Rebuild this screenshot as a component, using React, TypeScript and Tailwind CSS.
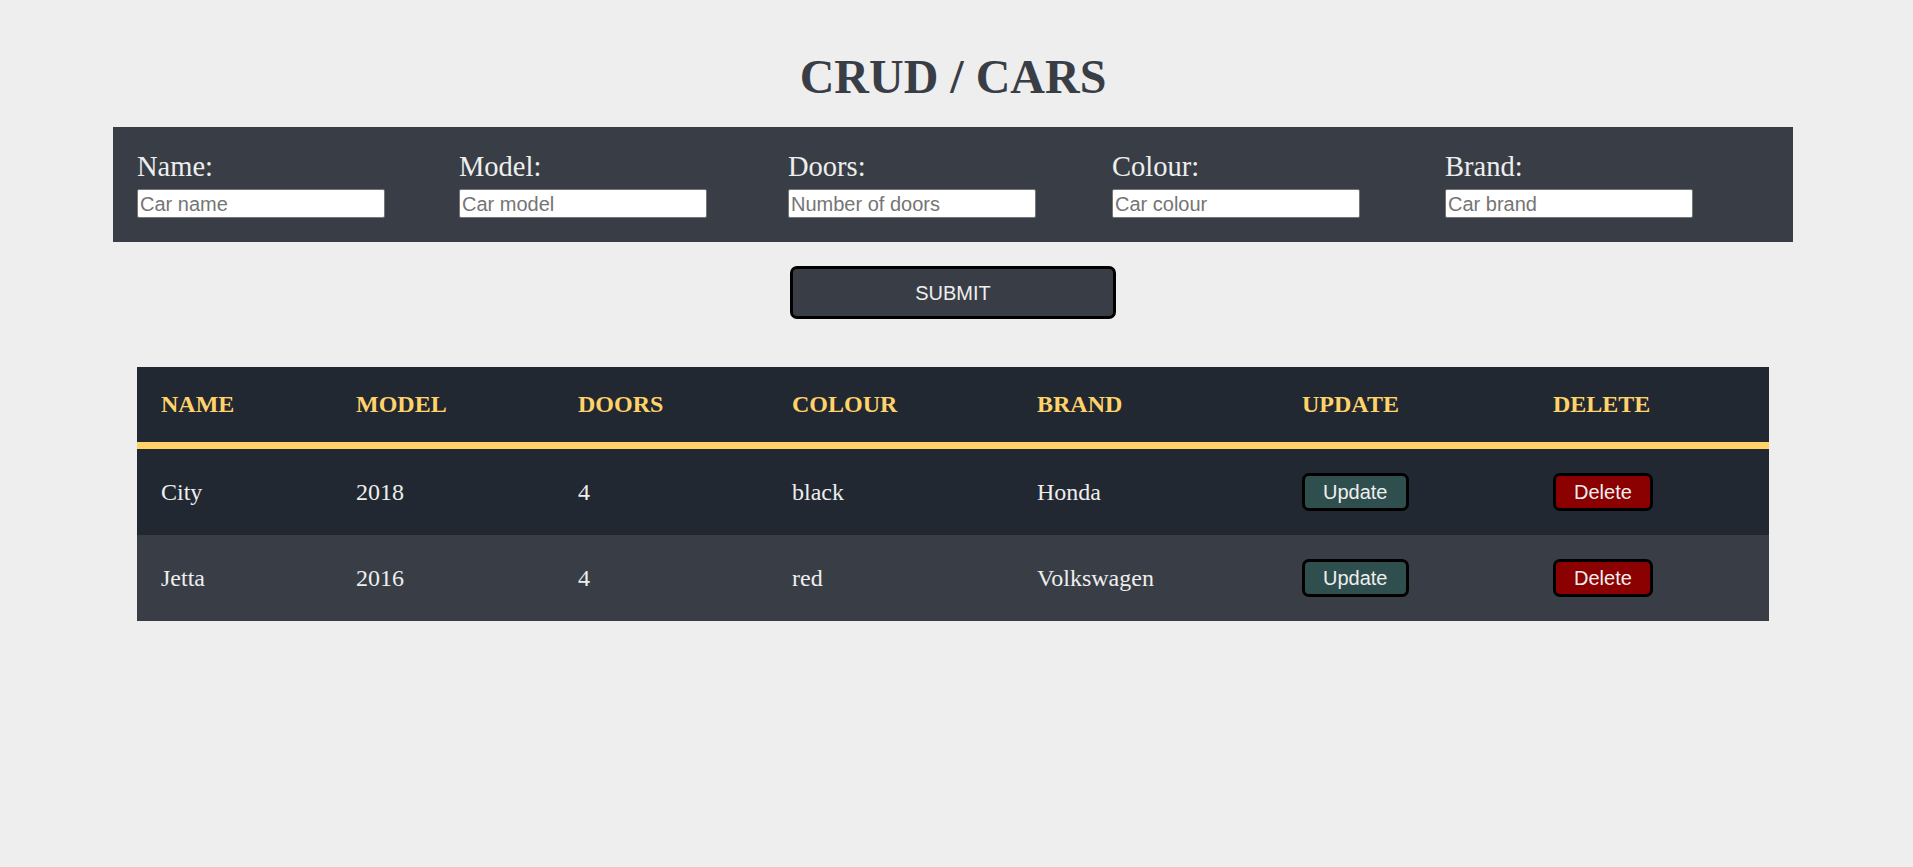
const fields = [
  { label: "Name:", placeholder: "Car name" },
  { label: "Model:", placeholder: "Car model" },
  { label: "Doors:", placeholder: "Number of doors" },
  { label: "Colour:", placeholder: "Car colour" },
  { label: "Brand:", placeholder: "Car brand" },
];

const columns = [
  { title: "NAME", className: "w-[195px]" },
  { title: "MODEL", className: "w-[222px]" },
  { title: "DOORS", className: "w-[214px]" },
  { title: "COLOUR", className: "w-[245px]" },
  { title: "BRAND", className: "w-[265px]" },
  { title: "UPDATE", className: "w-[251px]" },
  { title: "DELETE", className: "w-[240px]" },
];

const cars = [
  { name: "City", model: "2018", doors: "4", colour: "black", brand: "Honda" },
  { name: "Jetta", model: "2016", doors: "4", colour: "red", brand: "Volkswagen" },
];

const serif = "font-['Liberation_Serif','Times_New_Roman',serif]";
const sans = "font-['Liberation_Sans',Arial,sans-serif]";

export default function App() {
  return (
    <div className="min-h-screen bg-[#eeeeee] pr-[7px]">
      <div className="flex flex-col items-center pt-[49px]">
        <h1
          className={`${serif} text-[48px] leading-[56px] font-bold text-[#393e46]`}
        >
          CRUD / CARS
        </h1>

        <form className="mt-[22px] w-[1680px] bg-[#393e46] p-6">
          <div className="grid grid-cols-[322px_329px_324px_333px_248px]">
            {fields.map((field) => (
              <div key={field.label} className="flex flex-col">
                <label
                  className={`${serif} text-[28.5px] leading-[32px] text-[#eeeeee]`}
                >
                  {field.label}
                </label>
                <input
                  type="text"
                  placeholder={field.placeholder}
                  className={`${sans} mt-[6px] h-[29px] w-[248px] rounded-[2px] border border-[#767676] bg-white px-[2px] text-[20px] text-[#222] placeholder:text-[#757575] outline-none`}
                />
              </div>
            ))}
          </div>
        </form>

        <button
          type="button"
          className={`${sans} mt-6 h-[53px] w-[326px] rounded-[7px] border-[3px] border-black bg-[#393e46] text-[20px] text-[#eeeeee]`}
        >
          SUBMIT
        </button>

        <div className="mt-[48px] w-[1680px] px-6">
          <table className={`${serif} w-full table-fixed`}>
            <thead>
              <tr className="border-b-[7px] border-[#ffd369] bg-[#222831]">
                {columns.map((col) => (
                  <th
                    key={col.title}
                    className={`${col.className} px-6 py-6 text-left text-[24px] leading-[27px] font-bold text-[#ffd369]`}
                  >
                    {col.title}
                  </th>
                ))}
              </tr>
            </thead>
            <tbody>
              {cars.map((car, i) => (
                <tr
                  key={car.name}
                  className={i % 2 === 0 ? "bg-[#222831]" : "bg-[#393e46]"}
                >
                  {[car.name, car.model, car.doors, car.colour, car.brand].map(
                    (value, j) => (
                      <td
                        key={j}
                        className="px-6 py-6 text-[24px] leading-[27px] text-[#eeeeee]"
                      >
                        {value}
                      </td>
                    )
                  )}
                  <td className="px-6 py-6">
                    <button
                      type="button"
                      className={`${sans} h-[38px] rounded-[7px] border-[3px] border-black bg-[#2f4f4f] px-[18px] text-[20px] leading-none text-[#eeeeee]`}
                    >
                      Update
                    </button>
                  </td>
                  <td className="px-6 py-6">
                    <button
                      type="button"
                      className={`${sans} h-[38px] rounded-[7px] border-[3px] border-black bg-[#8b0000] px-[18px] text-[20px] leading-none text-[#eeeeee]`}
                    >
                      Delete
                    </button>
                  </td>
                </tr>
              ))}
            </tbody>
          </table>
        </div>
      </div>
    </div>
  );
}
